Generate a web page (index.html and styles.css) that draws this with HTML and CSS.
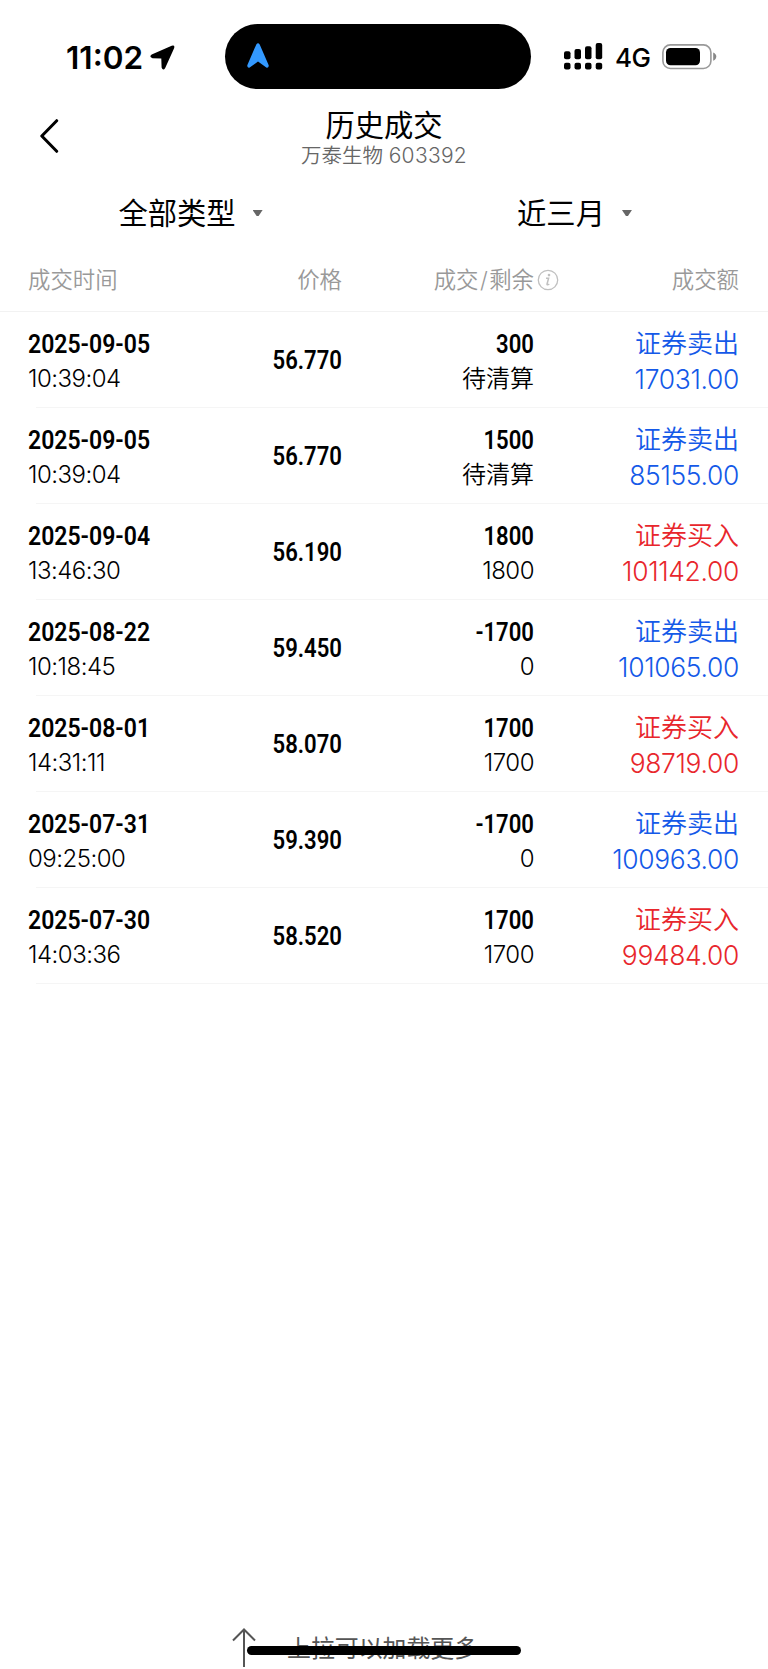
FILE: index.html
```
<!DOCTYPE html>
<html lang="zh-CN">
<head>
    <meta charset="UTF-8">
    <meta name="viewport" content="width=device-width, initial-scale=1.0">
    <title>历史成交</title>
    <link rel="stylesheet" href="styles.css">
</head>
<body>
    <div class="page">
        <!-- 状态栏 -->
        <div class="status-bar">
            <div class="status-left">
                <span class="clock">11:02</span>
                <svg class="location" width="25" height="25" viewBox="0 0 25 25"><path d="M1.7 9.6 21.7 .7Q25.2 -.2 24.1 3.2L15.2 23Q13 26.4 11.6 22.5L11.3 13.6 2.5 13.2Q-1.4 11.7 1.7 9.6Z"/></svg>
            </div>
            <div class="island">
                <svg width="22" height="25" viewBox="0 0 22 25"><path d="M9.3 1.4Q11-.9 12.7 1.4L21.7 22.3Q22 25.3 19.3 24.5L11 18.5 2.7 24.5Q0 25.3.3 22.3Z" fill="#3399ff"/></svg>
            </div>
            <div class="status-right">
                <svg class="signal" width="39" height="27" viewBox="0 0 39 27">
                    <rect x="0" y="8.2" width="6.5" height="8" rx="2"/>
                    <rect x="10.5" y="6" width="6.5" height="10.2" rx="2"/>
                    <rect x="21" y="3.2" width="6.5" height="13" rx="2"/>
                    <rect x="31.7" y="0" width="6.5" height="16.2" rx="2"/>
                    <rect x="0" y="19.7" width="6.5" height="6.8" rx="2"/>
                    <rect x="10.5" y="19.7" width="6.5" height="6.8" rx="2"/>
                    <rect x="21" y="19.7" width="6.5" height="6.8" rx="2"/>
                    <rect x="31.7" y="19.7" width="6.5" height="6.8" rx="2"/>
                </svg>
                <span class="network">4G</span>
                <svg class="battery" width="55" height="26" viewBox="0 0 55 26">
                    <rect x=".9" y=".9" width="48" height="23.6" rx="7.5" fill="none" stroke="#999" stroke-width="1.6"/>
                    <rect x="4" y="4" width="34" height="17.2" rx="4.5"/>
                    <path d="M51.2 8.5Q54.3 9.8 54.3 12.6T51.2 16.8Z" fill="#888"/>
                </svg>
            </div>
        </div>

        <!-- 标题 -->
        <div class="nav">
            <svg class="back" width="20" height="34" viewBox="0 0 20 34"><path d="M17.7 1.7 2.8 17 17.7 32.3" fill="none" stroke="#000" stroke-width="3" stroke-linecap="round" stroke-linejoin="round"/></svg>
            <div class="nav-title">
                <div class="title">历史成交</div>
                <div class="subtitle">万泰生物 <span>603392</span></div>
            </div>
        </div>

        <!-- 筛选 -->
        <div class="filters">
            <div class="filter">全部类型<i class="caret"></i></div>
            <div class="filter">近三月<i class="caret"></i></div>
        </div>

        <!-- 表头 -->
        <div class="grid head">
            <div>成交时间</div>
            <div class="right">价格</div>
            <div class="right with-info">成交<span class="slash">/</span>剩余
                <svg class="info" width="22" height="22" viewBox="0 0 22 22" fill="none" stroke="#c0c0c0"><circle cx="11" cy="11" r="9.7" stroke-width="1.3"/><path d="M9 9.2H11.6L10 15.2Q10 16.3 12.3 15.1" stroke-width="1.5"/><circle cx="12" cy="6.1" r="1.3" fill="#c0c0c0" stroke="none"/></svg>
            </div>
            <div class="right">成交额</div>
        </div>

        <!-- 成交记录 -->
        <div class="list">
            <div class="grid row">
                <div><div class="din date">2025-09-05</div><div class="sub">10:39:04</div></div>
                <div class="price din right">56.770</div>
                <div class="right"><div class="din">300</div><div class="sub cn">待清算</div></div>
                <div class="right sell"><div class="kind">证券卖出</div><div class="amount">17031.00</div></div>
            </div>
            <div class="grid row">
                <div><div class="din date">2025-09-05</div><div class="sub">10:39:04</div></div>
                <div class="price din right">56.770</div>
                <div class="right"><div class="din">1500</div><div class="sub cn">待清算</div></div>
                <div class="right sell"><div class="kind">证券卖出</div><div class="amount">85155.00</div></div>
            </div>
            <div class="grid row">
                <div><div class="din date">2025-09-04</div><div class="sub">13:46:30</div></div>
                <div class="price din right">56.190</div>
                <div class="right"><div class="din">1800</div><div class="sub">1800</div></div>
                <div class="right buy"><div class="kind">证券买入</div><div class="amount">101142.00</div></div>
            </div>
            <div class="grid row">
                <div><div class="din date">2025-08-22</div><div class="sub">10:18:45</div></div>
                <div class="price din right">59.450</div>
                <div class="right"><div class="din">-1700</div><div class="sub">0</div></div>
                <div class="right sell"><div class="kind">证券卖出</div><div class="amount">101065.00</div></div>
            </div>
            <div class="grid row">
                <div><div class="din date">2025-08-01</div><div class="sub">14:31:11</div></div>
                <div class="price din right">58.070</div>
                <div class="right"><div class="din">1700</div><div class="sub">1700</div></div>
                <div class="right buy"><div class="kind">证券买入</div><div class="amount">98719.00</div></div>
            </div>
            <div class="grid row">
                <div><div class="din date">2025-07-31</div><div class="sub">09:25:00</div></div>
                <div class="price din right">59.390</div>
                <div class="right"><div class="din">-1700</div><div class="sub">0</div></div>
                <div class="right sell"><div class="kind">证券卖出</div><div class="amount">100963.00</div></div>
            </div>
            <div class="grid row">
                <div><div class="din date">2025-07-30</div><div class="sub">14:03:36</div></div>
                <div class="price din right">58.520</div>
                <div class="right"><div class="din">1700</div><div class="sub">1700</div></div>
                <div class="right buy"><div class="kind">证券买入</div><div class="amount">99484.00</div></div>
            </div>
        </div>

        <!-- 上拉加载 -->
        <div class="load-more">
            <svg width="24" height="41" viewBox="0 0 24 41"><path d="M12 39V1.5M1 12.5 12 1.5 23 12.5" fill="none" stroke="#555" stroke-width="2"/></svg>
            <span>上拉可以加载更多</span>
        </div>
        <div class="home-bar"></div>
    </div>
</body>
</html>
```
FILE: styles.css
```
* {
    box-sizing: border-box;
}
body {
    margin: 0;
    background-color: #fff;
    color: #000;
    font-family: Inter, "Noto Sans CJK SC", sans-serif;
}
.page {
    position: relative;
    display: flex;
    flex-direction: column;
    width: 768px;
    height: 1669px;
    overflow: hidden;
}

/* 状态栏 */
.status-bar {
    display: flex;
    height: 89px;
    padding-top: 24px;
}
.status-left {
    display: flex;
    align-items: center;
    width: 225px;
    padding: 2px 0 0 66px;
}
.clock {
    width: 84px;
    font-size: 31.5px;
    font-weight: 600;
}
.island {
    display: flex;
    align-items: center;
    width: 306px;
    height: 65px;
    padding: 0 0 3px 22px;
    border-radius: 33px;
    background-color: #000;
}
.status-right {
    display: flex;
    align-items: center;
    padding-left: 33px;
}
.network {
    width: 47px;
    margin: 2px 0 0 12px;
    font-size: 26px;
    font-weight: 500;
    letter-spacing: -0.5px;
}

/* 标题 */
.nav {
    display: flex;
    height: 96px;
    padding-top: 16px;
}
.back {
    margin: 14px 0 0 39px;
}
.nav-title {
    flex: 1;
    margin-right: 59px;
    text-align: center;
}
.title {
    height: 37px;
    font-size: 29.3px;
    line-height: 42px;
}
.subtitle {
    color: #666;
    font-size: 20.5px;
    font-weight: 350;
    line-height: 27px;
}
.subtitle span {
    font-size: 21px;
    letter-spacing: 0.3px;
}

/* 筛选 */
.filters {
    display: flex;
    height: 57px;
}
.filter {
    display: flex;
    align-items: center;
    justify-content: center;
    width: 50%;
    height: 54px;
    padding: 0 3px 2px 0;
    font-size: 29.3px;
}
.caret {
    width: 10px;
    height: 6px;
    margin: 4px 0 0 17px;
    background-color: #666;
    clip-path: polygon(0 0, 100% 0, 60% 100%, 40% 100%);
}

/* 表格 */
.grid {
    display: grid;
    grid-template-columns: 157px 157px 192px 205px;
    padding-left: 28px;
}
.right {
    text-align: right;
}
.head {
    height: 70px;
    border-bottom: 1px solid #f2f2f2;
    color: #999;
    font-size: 22.4px;
    font-weight: 350;
    line-height: 76px;
}
.slash {
    margin: 0 1.5px;
}
.with-info {
    position: relative;
}
.info {
    position: absolute;
    left: 100%;
    top: 27px;
    margin-left: 3px;
}
.row {
    height: 96px;
    padding-top: 14px;
    background: linear-gradient(#f5f5f5, #f5f5f5) 36px 100% / 100% 1px no-repeat;
}
.din {
    height: 35px;
    font-family: Roboto, sans-serif;
    font-size: 26px;
    font-weight: 600;
    line-height: 36px;
    transform: scaleX(0.85);
    transform-origin: left;
}
.date {
    transform: scaleX(0.885);
}
.right .din,
.din.right {
    transform-origin: right;
}
.price {
    padding-top: 16px;
}
.sub {
    font-size: 24px;
    font-weight: 300;
    line-height: 36px;
    letter-spacing: -0.5px;
}
.cn {
    font-weight: 350;
    letter-spacing: 0;
}
.kind {
    height: 35px;
    font-size: 26px;
    font-weight: 350;
    line-height: 36px;
}
.amount {
    font-size: 26.4px;
    font-weight: 300;
    line-height: 36px;
    letter-spacing: -0.3px;
}
.sell {
    color: #1459e8;
}
.buy {
    color: #e8262c;
}

/* 上拉加载 */
.load-more {
    display: flex;
    align-items: center;
    height: 42px;
    margin-top: auto;
    padding-left: 232px;
    color: #555;
    font-size: 23.9px;
}
.load-more span {
    margin: 0 0 3px 31px;
}
.home-bar {
    position: absolute;
    left: 247px;
    bottom: 14px;
    width: 274px;
    height: 9px;
    border-radius: 5px;
    background-color: #000;
}
```
